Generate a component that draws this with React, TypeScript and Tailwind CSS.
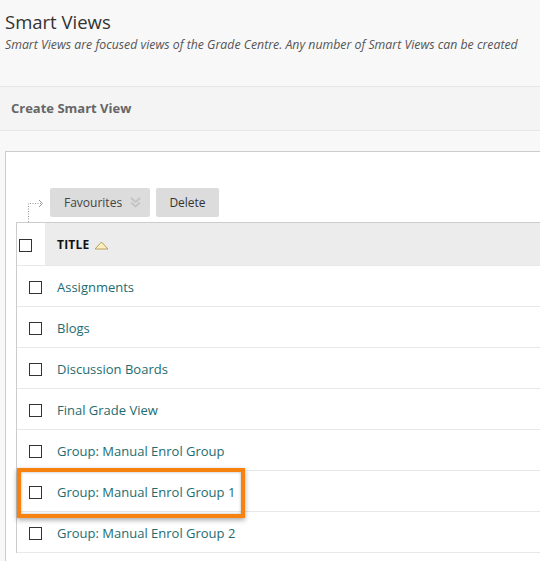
const rows = [
  'Assignments',
  'Blogs',
  'Discussion Boards',
  'Final Grade View',
  'Group: Manual Enrol Group',
  'Group: Manual Enrol Group 1',
  'Group: Manual Enrol Group 2',
];

function Checkbox() {
  return <span className="block w-[13px] h-[13px] border border-[#333] bg-white" />;
}

export default function App() {
  return (
    <div className="relative w-[540px] h-[561px] overflow-hidden bg-[#f8f8f8] font-['Open_Sans',sans-serif]">
      {/* Page header */}
      <div className="h-[86px] px-[5px] pt-[9px]">
        <h1 className="text-[18.5px] leading-[26px] text-[#333]">Smart Views</h1>
        <p className="mt-[1px] text-[12.3px] leading-[18px] italic text-[#555] whitespace-nowrap">
          Smart Views are focused views of the Grade Centre. Any number of Smart Views can be created
        </p>
      </div>

      {/* Action bar */}
      <div className="h-[45px] border-y border-[#e6e6e6] bg-[#f4f4f4] flex items-center px-[11px]">
        <span className="text-[13px] font-bold text-[#666]">Create Smart View</span>
      </div>

      <div className="pt-[20px]">
        <div className="ml-[5px] border-l border-t border-[#ccc] bg-white h-[420px] pt-[36px]">
          {/* Toolbar */}
          <div className="relative flex gap-[6px] pl-[44px] mb-[5px]">
            <svg className="absolute left-[21px] top-[10px]" width="20" height="24" viewBox="0 0 20 24">
              <path d="M1.5 24 V5.5 H14" fill="none" stroke="#999" strokeWidth="1" strokeDasharray="1 1.5" />
              <path d="M12 2 L15.5 5.5 L12 9" fill="none" stroke="#999" strokeWidth="1" />
            </svg>
            <button className="h-[29px] w-[100px] rounded-[2px] bg-[#dcdcdc] flex items-center pl-[14px] text-[12px] text-[#444]">
              Favourites
              <svg className="ml-[8px]" width="11" height="11" viewBox="0 0 11 11">
                <path d="M1 1 L5.5 5 L10 1 M1 5.5 L5.5 9.5 L10 5.5" fill="none" stroke="#c4c4c4" strokeWidth="2" />
              </svg>
            </button>
            <button className="h-[29px] w-[63px] rounded-[2px] bg-[#dcdcdc] text-[12px] text-[#333]">Delete</button>
          </div>

          {/* Table */}
          <div className="ml-[10px] border-l border-t border-[#ccc]">
            <div className="h-[43px] flex border-b border-[#e8e8e8]">
              <div className="w-[28px] bg-white flex items-center pl-[2px] pt-[2px]">
                <Checkbox />
              </div>
              <div className="flex-1 bg-[#ececec] flex items-center pl-[12px] pt-[2px] gap-[5px]">
                <span className="text-[12px] font-bold text-[#111] tracking-[0.2px]">TITLE</span>
                <svg width="15" height="9" viewBox="0 0 15 9">
                  <path d="M1 8 L7.5 1 L14 8 Z" fill="#fbefc0" stroke="#b8a060" strokeWidth="1" />
                </svg>
              </div>
            </div>
            {rows.map((r) => (
              <div key={r} className="h-[41px] flex items-center pt-[3px] border-b border-[#e8e8e8]">
                <span className="ml-[12px]">
                  <Checkbox />
                </span>
                <span className="ml-[15px] text-[13px] text-[#1d6c70]">{r}</span>
              </div>
            ))}
          </div>
        </div>
      </div>

      {/* Highlight */}
      <div className="absolute left-[17px] top-[468px] w-[228px] h-[50px] border-[4px] border-[#f7820f] shadow-[0_2px_5px_rgba(0,0,0,0.35),inset_0_0_3px_rgba(0,0,0,0.3)]" />
    </div>
  );
}
